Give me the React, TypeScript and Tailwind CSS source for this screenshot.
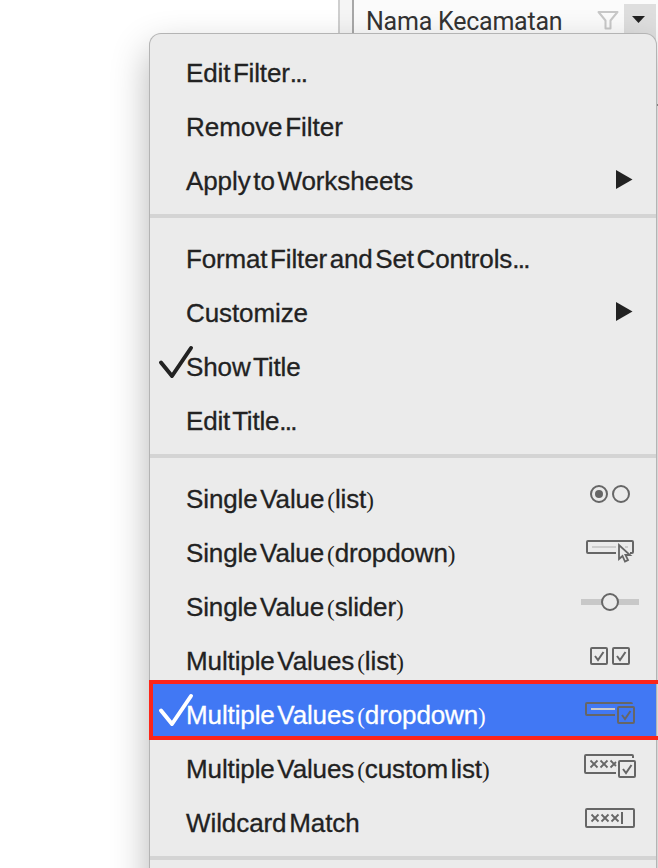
import React from "react";

type Item = {
  label: string;
  inner?: string;
  dots?: boolean;
  spacing: string;
  icon?: React.ReactNode;
  checked?: boolean;
  active?: boolean;
};

const Arrow = () => (
  <svg className="h-[54px] w-[80px]" viewBox="576 148 80 54">
    <path d="M616 170v19l16.500-9.500z" fill="#222" />
  </svg>
);

const Icon = ({ y, children }: { y: number; children: React.ReactNode }) => (
  <svg
    className="h-[54px] w-[80px]"
    viewBox={`576 ${y} 80 54`}
    fill="none"
    stroke="#666"
    strokeWidth="2"
  >
    {children}
  </svg>
);

const X = ({ x, y }: { x: number; y: number }) => (
  <path d={`M${x} ${y}l7 7m0-7l-7 7`} strokeWidth="1.8" />
);

const radio = (
  <Icon y={466}>
    <circle cx="599" cy="494" r="8" />
    <circle cx="599" cy="494" r="4" fill="#666" stroke="none" />
    <circle cx="621" cy="494" r="8" />
  </Icon>
);
const dropdown = (
  <Icon y={520}>
    <path d="M616 553H588q-1 0-1-1V542q0-1 1-1H632q1 0 1 1V552q0 1-1 1h-2" />
    <path d="M592 547h24m9 0h3" stroke="#ccc" />
    <path d="M619 545v14l3.500-3 2.500 5.500 3-1.500-2.500-5h4.500z" fill="#ebebeb" strokeWidth="1.800" />
  </Icon>
);
const slider = (
  <Icon y={574}>
    <path d="M581 602h58" stroke="#c8c8c8" strokeWidth="6" />
    <circle cx="610" cy="602" r="8" fill="#ebebeb" />
  </Icon>
);
const checks = (
  <Icon y={628}>
    <rect x="591" y="648" width="16" height="16" rx="1" />
    <rect x="613" y="648" width="16" height="16" rx="1" />
    <path d="M595 656l3 4 5.500-8M617 656l3 4 5.500-8" />
  </Icon>
);
const multiDrop = (
  <Icon y={682}>
    <path d="M615 715H587q-1 0-1-1V704q0-1 1-1H631q1 0 1 1" />
    <path d="M591 709h24" stroke="#ccc" />
    <rect x="618" y="707" width="16" height="16" rx="1" />
    <path d="M622 715l3 4 5.500-8" />
  </Icon>
);
const customList = (
  <Icon y={736}>
    <path d="M616 773H586q-1 0-1-1V756q0-1 1-1H632q1 0 1 1v2" />
    <X x={590.5} y={760.5} />
    <X x={600.5} y={760.5} />
    <path d="M610.500 760.500l5.500 5.500m0-4l-5.500 5.500" strokeWidth="1.800" />
    <rect x="619" y="761" width="16" height="16" rx="1" />
    <path d="M623 769l3 4 5.500-8" />
  </Icon>
);
const wildcard = (
  <Icon y={790}>
    <rect x="586" y="809" width="48" height="18" rx="1" />
    <X x={591.5} y={814.5} />
    <X x={601.5} y={814.5} />
    <X x={611.5} y={814.5} />
    <path d="M622 812v12" />
  </Icon>
);

const groups: Item[][] = [
  [
    { label: "Edit Filter", dots: true, spacing: "tracking-[-0.15px]" },
    { label: "Remove Filter", spacing: "tracking-[-0.05px]" },
    { label: "Apply to Worksheets", spacing: "tracking-[-0.1px]", icon: <Arrow /> },
  ],
  [
    { label: "Format Filter and Set Controls", dots: true, spacing: "tracking-[-0.15px]" },
    { label: "Customize", spacing: "tracking-[-0.1px]", icon: <Arrow /> },
    { label: "Show Title", spacing: "tracking-[-0.1px]", checked: true },
    { label: "Edit Title", dots: true, spacing: "tracking-[-0.2px]" },
  ],
  [
    { label: "Single Value", inner: "list", spacing: "tracking-[-0.12px]", icon: radio },
    { label: "Single Value", inner: "dropdown", spacing: "tracking-[-0.14px]", icon: dropdown },
    { label: "Single Value", inner: "slider", spacing: "tracking-[-0.14px]", icon: slider },
    { label: "Multiple Values", inner: "list", spacing: "tracking-[-0.12px]", icon: checks },
    { label: "Multiple Values", inner: "dropdown", spacing: "tracking-[-0.12px]", icon: multiDrop, checked: true, active: true },
    { label: "Multiple Values", inner: "custom list", spacing: "tracking-[-0.12px]", icon: customList },
    { label: "Wildcard Match", spacing: "tracking-[-0.08px]", icon: wildcard },
  ],
];

function Paren({ children }: { children: string }) {
  return (
    <span className="font-['Liberation_Serif',serif] text-[23px] tracking-normal [-webkit-text-stroke:0px]">
      {children}
    </span>
  );
}

function Row({ item }: { item: Item }) {
  return (
    <div
      className={`relative flex h-[54px] items-center justify-between ${
        item.active ? "bg-[#4178f4] text-white" : "text-[#222]"
      }`}
    >
      {item.checked && (
        <svg className="absolute top-0 left-0 h-[54px] w-[50px]" viewBox="0 0 50 54" fill="none" stroke="currentColor" strokeWidth="4" strokeLinecap="round" strokeLinejoin="round">
          <path d="M11 28.500L22 42L41 14" />
        </svg>
      )}
      <span className={`relative pt-[13px] pl-9 text-[26px] leading-[41px] whitespace-nowrap [-webkit-text-stroke:0.3px] [word-spacing:-4.4px] ${item.spacing}`}>
        {item.label}
        {item.dots && <span className="tracking-[-1.7px]">...</span>}
        {item.inner && (
          <>
            <span className="inline-block w-[3px]" />
            <Paren>(</Paren>
            {item.inner}
            <Paren>)</Paren>
          </>
        )}
      </span>
      {item.icon}
    </div>
  );
}

export default function App() {
  return (
    <div className="relative h-[868px] w-[658px] overflow-hidden bg-white font-['Liberation_Sans',Arial,sans-serif]">
      <header className="ml-[338px] flex h-[868px] items-start border-l-2 border-[#cfcfcf] bg-[#f5f5f5]">
        <div className="ml-3 flex h-full flex-1 items-start border-l-2 border-[#a8a8a8] bg-[#fbfbfb]">
          <span className="ml-3 pt-[6px] font-['Roboto',sans-serif] text-[25px] leading-8 tracking-[-0.23px] whitespace-nowrap text-[#333]">
            Nama Kecamatan
          </span>
          <svg className="absolute top-[8px] left-[596px] h-6 w-6" viewBox="0 0 24 24" fill="none" stroke="#c8c8c8" strokeWidth="2" strokeLinejoin="round">
            <path d="M2.500 4H21.500L14.500 12.500V20.500H9.500V12.500Z" />
          </svg>
          <div className="absolute top-1 left-[624px] flex h-[40px] w-8 justify-center bg-[#dedede] pt-3">
            <svg className="mr-[3px] h-[7px] w-[13px]" viewBox="0 0 13 7"><path d="M0 0H13L6.500 7Z" fill="#222" /></svg>
          </div>
          <div className="absolute top-[104px] right-0 h-[2px] w-[2px] bg-[#999]" />
        </div>
      </header>

      <nav className="absolute top-[34px] left-[150px] h-[900px] w-[506px] rounded-[11px] bg-[#ebebeb] pt-[6px] shadow-[0_0_0_1px_#b4b4b4,0_16px_38px_rgba(0,0,0,0.30)]">
        {groups.map((group, i) => (
          <section key={i}>
            {group.map((item) => (
              <Row key={item.label + (item.inner ?? "")} item={item} />
            ))}
            <div className={`mt-3 h-1 bg-[#d4d4d4] ${i === 2 ? "" : "mb-2"}`} />
          </section>
        ))}
      </nav>

      <div className="absolute top-[680px] left-[149px] h-[60px] w-[509px] border-4 border-r-0 border-[#fc2518]" />
    </div>
  );
}
